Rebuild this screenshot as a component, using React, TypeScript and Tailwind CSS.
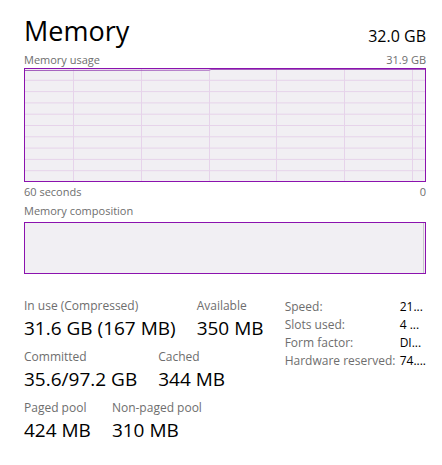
import React from 'react';

const FONT = { fontFamily: '"Segoe UI", "Open Sans", "Noto Sans", sans-serif' };

const V_LINES = [48, 116, 184, 251, 319, 387];
const H_LINES = [11.3, 22.6, 33.9, 45.2, 56.5, 67.8, 79.1, 90.4, 101.7];

function UsageChart() {
  return (
    <div className="border border-[#8b12ae] h-[114px] bg-[#f1eff3]">
      <svg width="400" height="112" viewBox="0 0 400 112" className="block">
        {H_LINES.map(y => (
          <line key={y} x1="0" x2="400" y1={y} y2={y} stroke="#e6d3ea" strokeWidth="1" />
        ))}
        {V_LINES.map(x => (
          <line key={x} x1={x + 0.5} x2={x + 0.5} y1="0" y2="112" stroke="#e6d3ea" strokeWidth="1" />
        ))}
        <polyline points="0,1.5 184,1.2 186,0.5 400,0.5" fill="none" stroke="#a35ebd" strokeWidth="1" />
      </svg>
    </div>
  );
}

function Stat({ label, value }: { label: string; value: string }) {
  return (
    <div className="flex flex-col">
      <span className="text-[12px] leading-[16px] text-[#6e6e6e]">{label}</span>
      <span className="text-[19px] leading-[26px] text-black mt-[1px]">{value}</span>
    </div>
  );
}

const SPECS = [
  ['Speed:', '21...'],
  ['Slots used:', '4 ...'],
  ['Form factor:', 'DI...'],
  ['Hardware reserved:', '74....'],
];

export default function App() {
  return (
    <div className="w-[442px] h-[465px] bg-white pl-[24px] pr-[16px] pt-[12px]" style={FONT}>
      <div className="flex items-end justify-between">
        <span className="text-[27px] leading-[38px] text-black">Memory</span>
        <span className="text-[16px] leading-[24px] text-black mb-[2px]">32.0 GB</span>
      </div>
      <div className="flex justify-between text-[11px] leading-[16px] text-[#6e6e6e] mt-[2px]">
        <span>Memory usage</span>
        <span>31.9 GB</span>
      </div>
      <UsageChart />
      <div className="flex justify-between text-[11px] leading-[16px] text-[#6e6e6e] mt-[2px]">
        <span>60 seconds</span>
        <span>0</span>
      </div>
      <div className="text-[11px] leading-[16px] text-[#6e6e6e] mt-[3px]">Memory composition</div>
      <div className="border border-[#8b12ae] h-[52px] bg-[#f1eff3] mt-[3px] flex justify-end">
        <div className="w-[1px] h-full bg-[#c9c4cc] mr-[1px]" />
      </div>

      <div className="flex mt-[24px]">
        <div className="flex flex-col gap-[8px] w-[261px]">
          <div className="flex gap-[21px]">
            <Stat label="In use (Compressed)" value="31.6 GB (167 MB)" />
            <Stat label="Available" value="350 MB" />
          </div>
          <div className="flex gap-[21px]">
            <Stat label="Committed" value="35.6/97.2 GB" />
            <Stat label="Cached" value="344 MB" />
          </div>
          <div className="flex gap-[21px]">
            <Stat label="Paged pool" value="424 MB" />
            <Stat label="Non-paged pool" value="310 MB" />
          </div>
        </div>
        <div className="flex flex-col">
          {SPECS.map(([k, v]) => (
            <div key={k} className="flex text-[12px] leading-[18px]">
              <span className="w-[115px] text-[#6e6e6e]">{k}</span>
              <span className="text-black">{v}</span>
            </div>
          ))}
        </div>
      </div>
    </div>
  );
}
